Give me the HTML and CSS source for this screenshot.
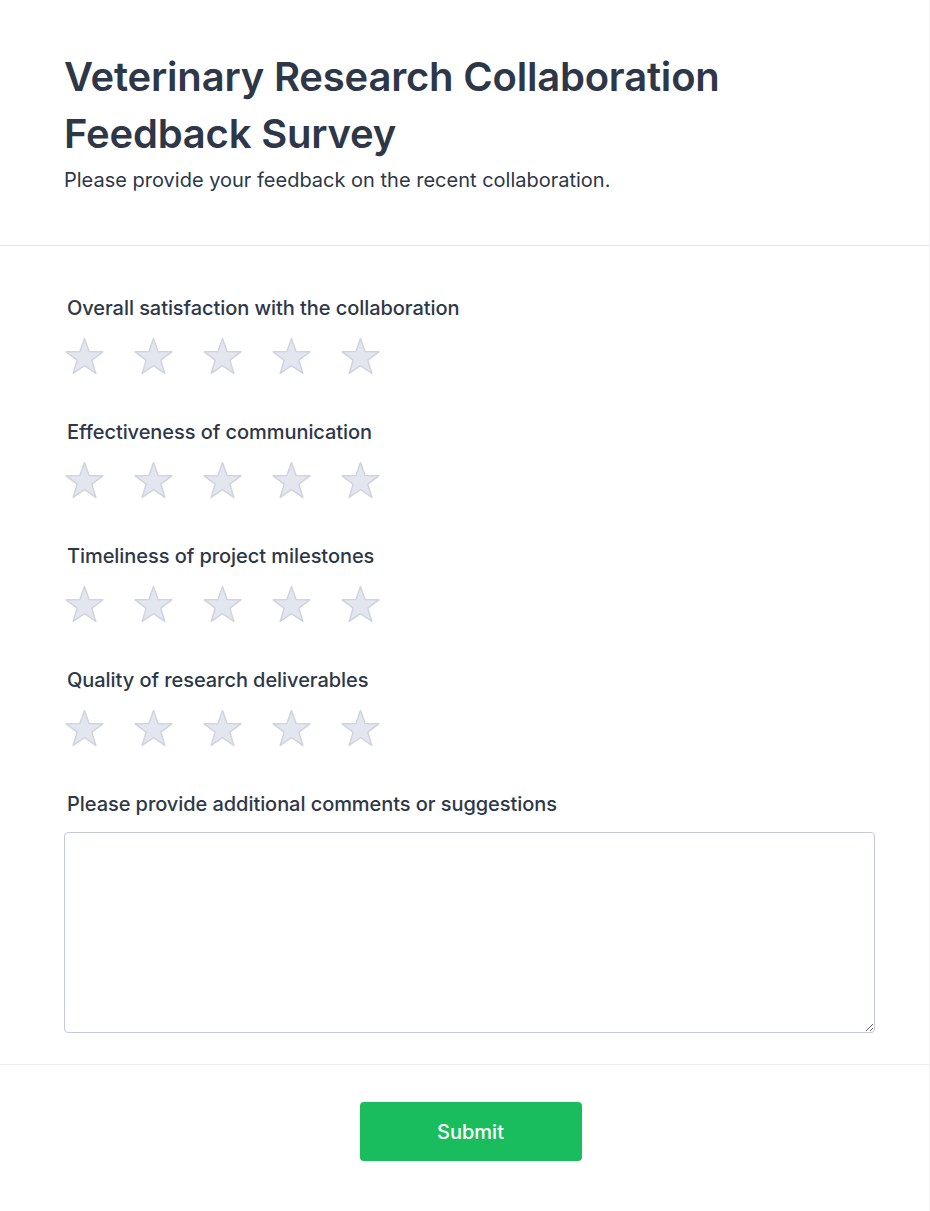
FILE: index.html
```html
<!DOCTYPE html>
<html lang="en">
<head>
<meta charset="utf-8">
<title>Veterinary Research Collaboration Feedback Survey</title>
<link rel="stylesheet" href="styles.css">
</head>
<body>
<div class="card">
  <header class="card-header">
    <h1 class="title">Veterinary Research Collaboration Feedback Survey</h1>
    <p class="subtitle">Please provide your feedback on the recent collaboration.</p>
  </header>
  <form class="card-body">
    <div class="question">
      <div class="label">Overall satisfaction with the collaboration</div>
      <div class="stars">
        <svg class="star" viewBox="-1 -1 41 39"><path d="M19.5 0.5L24.04 13.55L37.86 13.84L26.84 22.19L30.84 35.41L19.5 27.52L8.16 35.41L12.16 22.19L1.14 13.84L14.96 13.55Z"/></svg>
        <svg class="star" viewBox="-1 -1 41 39"><path d="M19.5 0.5L24.04 13.55L37.86 13.84L26.84 22.19L30.84 35.41L19.5 27.52L8.16 35.41L12.16 22.19L1.14 13.84L14.96 13.55Z"/></svg>
        <svg class="star" viewBox="-1 -1 41 39"><path d="M19.5 0.5L24.04 13.55L37.86 13.84L26.84 22.19L30.84 35.41L19.5 27.52L8.16 35.41L12.16 22.19L1.14 13.84L14.96 13.55Z"/></svg>
        <svg class="star" viewBox="-1 -1 41 39"><path d="M19.5 0.5L24.04 13.55L37.86 13.84L26.84 22.19L30.84 35.41L19.5 27.52L8.16 35.41L12.16 22.19L1.14 13.84L14.96 13.55Z"/></svg>
        <svg class="star" viewBox="-1 -1 41 39"><path d="M19.5 0.5L24.04 13.55L37.86 13.84L26.84 22.19L30.84 35.41L19.5 27.52L8.16 35.41L12.16 22.19L1.14 13.84L14.96 13.55Z"/></svg>
      </div>
    </div>
    <div class="question">
      <div class="label">Effectiveness of communication</div>
      <div class="stars">
        <svg class="star" viewBox="-1 -1 41 39"><path d="M19.5 0.5L24.04 13.55L37.86 13.84L26.84 22.19L30.84 35.41L19.5 27.52L8.16 35.41L12.16 22.19L1.14 13.84L14.96 13.55Z"/></svg>
        <svg class="star" viewBox="-1 -1 41 39"><path d="M19.5 0.5L24.04 13.55L37.86 13.84L26.84 22.19L30.84 35.41L19.5 27.52L8.16 35.41L12.16 22.19L1.14 13.84L14.96 13.55Z"/></svg>
        <svg class="star" viewBox="-1 -1 41 39"><path d="M19.5 0.5L24.04 13.55L37.86 13.84L26.84 22.19L30.84 35.41L19.5 27.52L8.16 35.41L12.16 22.19L1.14 13.84L14.96 13.55Z"/></svg>
        <svg class="star" viewBox="-1 -1 41 39"><path d="M19.5 0.5L24.04 13.55L37.86 13.84L26.84 22.19L30.84 35.41L19.5 27.52L8.16 35.41L12.16 22.19L1.14 13.84L14.96 13.55Z"/></svg>
        <svg class="star" viewBox="-1 -1 41 39"><path d="M19.5 0.5L24.04 13.55L37.86 13.84L26.84 22.19L30.84 35.41L19.5 27.52L8.16 35.41L12.16 22.19L1.14 13.84L14.96 13.55Z"/></svg>
      </div>
    </div>
    <div class="question">
      <div class="label">Timeliness of project milestones</div>
      <div class="stars">
        <svg class="star" viewBox="-1 -1 41 39"><path d="M19.5 0.5L24.04 13.55L37.86 13.84L26.84 22.19L30.84 35.41L19.5 27.52L8.16 35.41L12.16 22.19L1.14 13.84L14.96 13.55Z"/></svg>
        <svg class="star" viewBox="-1 -1 41 39"><path d="M19.5 0.5L24.04 13.55L37.86 13.84L26.84 22.19L30.84 35.41L19.5 27.52L8.16 35.41L12.16 22.19L1.14 13.84L14.96 13.55Z"/></svg>
        <svg class="star" viewBox="-1 -1 41 39"><path d="M19.5 0.5L24.04 13.55L37.86 13.84L26.84 22.19L30.84 35.41L19.5 27.52L8.16 35.41L12.16 22.19L1.14 13.84L14.96 13.55Z"/></svg>
        <svg class="star" viewBox="-1 -1 41 39"><path d="M19.5 0.5L24.04 13.55L37.86 13.84L26.84 22.19L30.84 35.41L19.5 27.52L8.16 35.41L12.16 22.19L1.14 13.84L14.96 13.55Z"/></svg>
        <svg class="star" viewBox="-1 -1 41 39"><path d="M19.5 0.5L24.04 13.55L37.86 13.84L26.84 22.19L30.84 35.41L19.5 27.52L8.16 35.41L12.16 22.19L1.14 13.84L14.96 13.55Z"/></svg>
      </div>
    </div>
    <div class="question">
      <div class="label">Quality of research deliverables</div>
      <div class="stars">
        <svg class="star" viewBox="-1 -1 41 39"><path d="M19.5 0.5L24.04 13.55L37.86 13.84L26.84 22.19L30.84 35.41L19.5 27.52L8.16 35.41L12.16 22.19L1.14 13.84L14.96 13.55Z"/></svg>
        <svg class="star" viewBox="-1 -1 41 39"><path d="M19.5 0.5L24.04 13.55L37.86 13.84L26.84 22.19L30.84 35.41L19.5 27.52L8.16 35.41L12.16 22.19L1.14 13.84L14.96 13.55Z"/></svg>
        <svg class="star" viewBox="-1 -1 41 39"><path d="M19.5 0.5L24.04 13.55L37.86 13.84L26.84 22.19L30.84 35.41L19.5 27.52L8.16 35.41L12.16 22.19L1.14 13.84L14.96 13.55Z"/></svg>
        <svg class="star" viewBox="-1 -1 41 39"><path d="M19.5 0.5L24.04 13.55L37.86 13.84L26.84 22.19L30.84 35.41L19.5 27.52L8.16 35.41L12.16 22.19L1.14 13.84L14.96 13.55Z"/></svg>
        <svg class="star" viewBox="-1 -1 41 39"><path d="M19.5 0.5L24.04 13.55L37.86 13.84L26.84 22.19L30.84 35.41L19.5 27.52L8.16 35.41L12.16 22.19L1.14 13.84L14.96 13.55Z"/></svg>
      </div>
    </div>
    <div class="comments">
      <label class="label" for="comments">Please provide additional comments or suggestions</label>
      <textarea id="comments" class="textarea"></textarea>
    </div>
  </form>
  <footer class="card-footer">
    <button type="button" class="submit">Submit</button>
  </footer>
</div>
</body>
</html>
```
FILE: styles.css
```css
* { box-sizing: border-box; }
html, body { margin: 0; padding: 0; background: #ffffff; }
body {
  font-family: Inter, "Noto Sans", sans-serif;
  color: #2d3748;
}
.card {
  width: 930px;
  min-height: 1211px;
  background: #fff;
  border-right: 1px solid #f2f2f5;
  border-bottom: 1px solid #f2f2f5;
}
.card-header {
  padding: 48px 64px 51px;
  border-bottom: 1px solid #e2e4ea;
}
.title {
  margin: 0;
  font-size: 40px;
  line-height: 57px;
  font-weight: 600;
  letter-spacing: -0.2px;
  color: #2d3748;
  max-width: 720px;
}
.subtitle {
  margin: 4px 0 0;
  font-size: 20px;
  line-height: 28px;
  font-weight: 400;
  color: #2d3748;
}
.card-body {
  padding: 48px 54px 31px 64px;
  border-bottom: 1px solid #eceef2;
}
.question {
  margin-bottom: 42px;
}
.label {
  display: block;
  padding-left: 3px;
  font-size: 20px;
  line-height: 28px;
  font-weight: 500;
  letter-spacing: -0.06px;
  color: #2d3748;
}
.stars {
  display: flex;
  gap: 28px;
  margin-top: 15px;
  height: 39px;
  align-items: center;
}
.star {
  flex: none;
  width: 41px;
  height: 39px;
  fill: #e3e6ef;
  stroke: #d0d4e0;
  stroke-width: 1.5;
  stroke-linejoin: round;
}
.comments .textarea {
  display: block;
  width: 811px;
  height: 201px;
  margin-top: 14px;
  border: 1px solid #c5c8d8;
  border-radius: 4px;
  resize: vertical;
  font-family: inherit;
  font-size: 16px;
  padding: 10px;
}
.card-footer {
  display: flex;
  justify-content: center;
  padding: 37px 0 50px 12px;
}
.submit {
  width: 222px;
  height: 59px;
  border: none;
  border-radius: 4px;
  background: #1abd5d;
  color: #fff;
  font-family: inherit;
  font-size: 20px;
  font-weight: 500;
  cursor: pointer;
}
```
